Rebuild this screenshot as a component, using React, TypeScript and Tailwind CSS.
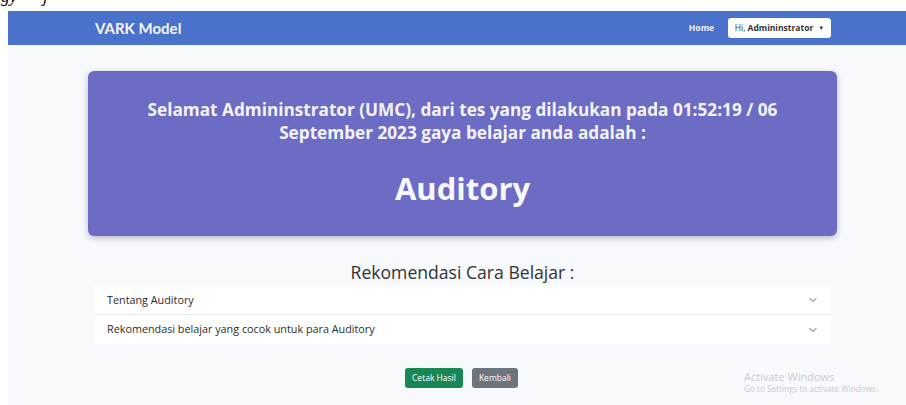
import React from "react";
import { ChevronDown } from "lucide-react";

const font = { fontFamily: "'Open Sans', 'Noto Sans', sans-serif" };

function AccordionRow({ title, last }: { title: string; last?: boolean }) {
  return (
    <div
      className={`flex h-[29px] items-center justify-between bg-white pl-[13px] pr-[12px] ${
        last ? "" : "border-b border-[#e9ebef]"
      }`}
    >
      <span className="text-[10.8px] text-[#2b2b2b]">{title}</span>
      <ChevronDown size={12} strokeWidth={1.8} className="text-[#444]" />
    </div>
  );
}

export default function App() {
  return (
    <div className="relative h-[405px] w-[906px] overflow-hidden bg-white" style={font}>
      {/* strip of the page above the app */}
      <div className="h-[11px] overflow-hidden">
        <div
          className="-mt-[13px] pl-[1px] text-[17px] leading-[20px] text-black"
          style={{ fontFamily: "'Liberation Serif', serif" }}
        >
          <span className="italic">gy</span>
          <span className="ml-[26px] italic">j</span>
        </div>
      </div>

      <div className="ml-[8px] flex h-[394px] flex-col bg-[#f8f9fd]">
        {/* navbar */}
        <nav className="flex h-[34px] items-center bg-[#4b72ca] pl-[87px] pr-[75px]">
          <span
            className="text-[15px] font-bold text-[#f4f6fb]"
            style={{ fontFamily: "Lato, sans-serif" }}
          >
            VARK Model
          </span>
          <div className="ml-auto flex items-center">
            <span className="text-[8.5px] font-bold text-[#eef2fb]">Home</span>
            <button className="ml-[14px] flex h-[20px] w-[103px] items-center justify-center gap-[5px] rounded-[3px] bg-white text-[8.5px] text-[#333]">
              <span className="text-[#333]">
                Hi, <span className="font-bold text-[#333]">Admininstrator</span>
              </span>
              <span className="text-[6px] text-[#333]">▼</span>
            </button>
          </div>
        </nav>

        {/* result card */}
        <div className="ml-[80px] mt-[26px] flex h-[165px] w-[749px] flex-col items-center rounded-[6px] bg-[#6c6cc5] shadow-[0_2px_6px_rgba(60,60,110,0.35)]">
          <p className="mt-[27px] text-center text-[17.2px] font-bold leading-[23px] text-[#f3f3f8]">
            Selamat Admininstrator (UMC), dari tes yang dilakukan pada 01:52:19 / 06
            <br />
            September 2023 gaya belajar anda adalah :
          </p>
          <p className="mt-[24px] text-[31px] font-bold leading-[40px] text-[#f8f8fc]">Auditory</p>
        </div>

        {/* recommendations */}
        <h2 className="mt-[24px] pl-[11px] text-center text-[17.6px] leading-[24px] text-[#333]">
          Rekomendasi Cara Belajar :
        </h2>
        <div className="ml-[86px] mt-[2px] w-[737px]">
          <AccordionRow title="Tentang Auditory" />
          <AccordionRow title="Rekomendasi belajar yang cocok untuk para Auditory" last />
        </div>

        {/* actions */}
        <div className="mt-[24px] flex justify-center gap-[9px] pl-[9px]">
          <button className="h-[20px] rounded-[3px] bg-[#198754] px-[7px] text-[8.5px] text-white">
            Cetak Hasil
          </button>
          <button className="h-[20px] rounded-[3px] bg-[#6c757d] px-[7px] text-[8.5px] text-white">
            Kembali
          </button>
        </div>
      </div>

      {/* system watermark */}
      <div className="absolute left-[744px] top-[371px] leading-none text-[#c9cad0]">
        <div className="text-[11px] leading-[12px]">Activate Windows</div>
        <div className="mt-[1px] text-[8.2px] leading-[10px]">Go to Settings to activate Windows.</div>
      </div>
    </div>
  );
}
